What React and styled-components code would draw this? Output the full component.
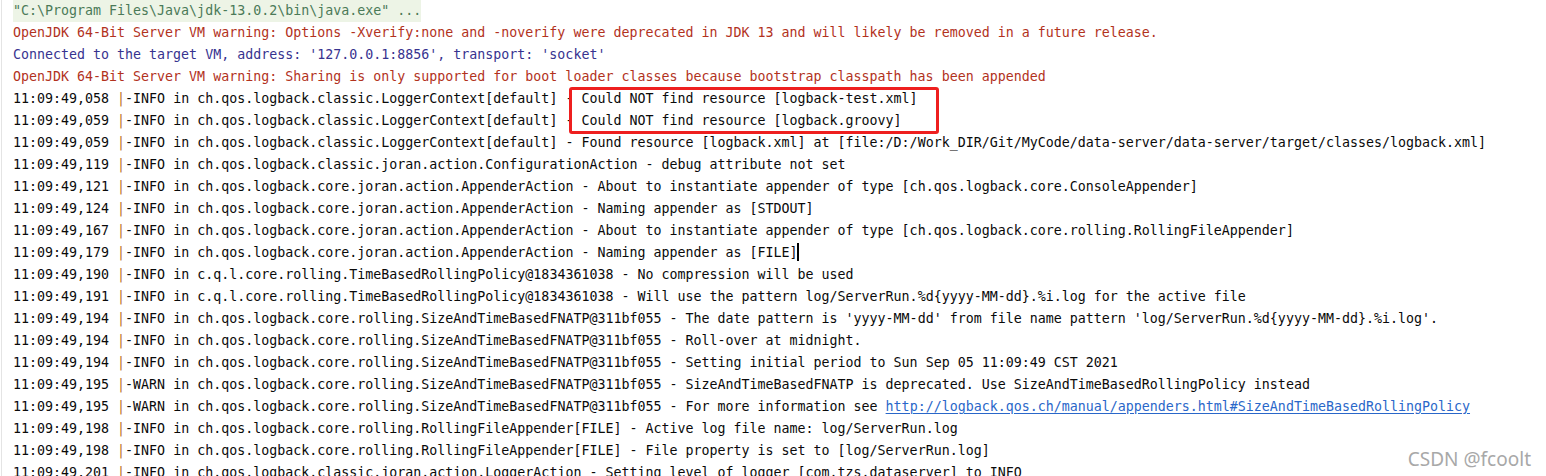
import React from "react";
import styled, { createGlobalStyle } from "styled-components";

const Global = createGlobalStyle`
  html, body { margin: 0; padding: 0; background: #ffffff; overflow: hidden; }
  #root { width: 1546px; height: 476px; overflow: hidden; }
`;

const Console = styled.div`
  position: relative;
  height: 476px;
  margin-left: 1px;
  border-left: 1px solid #e4e4e4;
  padding-left: 11px;
  font-family: "DejaVu Sans Mono", "Liberation Mono", monospace;
  font-size: 13.3px;
  line-height: 22px;
  color: #0a0a0a;
  white-space: pre;
  overflow: hidden;
`;

const toneColor = {
  cmd: "#4b7a58",
  err: "#b2321d",
  sys: "#37338f",
  out: "#0a0a0a",
};

const Line = styled.div`
  height: 22px;
  color: ${(p) => toneColor[p.$tone] || toneColor.out};
`;

const CommandText = styled.span`
  display: inline-block;
  background: #edf4e6;
`;

const Pipe = styled.span`
  color: #bb7428;
`;

const Link = styled.span`
  color: #2a67c9;
  text-decoration: underline;
  text-underline-offset: 2px;
`;

const Caret = styled.span`
  display: inline-block;
  width: 2px;
  height: 18px;
  background: #000;
  vertical-align: -4px;
  margin-left: -1px;
`;

const Highlight = styled.div`
  position: absolute;
  left: 567px;
  top: 87px;
  width: 364px;
  height: 41px;
  border: 3px solid #ee1f1f;
  border-radius: 3px;
  pointer-events: none;
`;

const Watermark = styled.div`
  position: absolute;
  right: 15px;
  bottom: 5px;
  font-family: "Noto Sans", "Liberation Sans", sans-serif;
  font-size: 19px;
  line-height: 24px;
  color: #a8a8a8;
  white-space: nowrap;
`;

const logs = [
  ["058", "INFO in ch.qos.logback.classic.LoggerContext[default] - Could NOT find resource [logback-test.xml]"],
  ["059", "INFO in ch.qos.logback.classic.LoggerContext[default] - Could NOT find resource [logback.groovy]"],
  ["059", "INFO in ch.qos.logback.classic.LoggerContext[default] - Found resource [logback.xml] at [file:/D:/Work_DIR/Git/MyCode/data-server/data-server/target/classes/logback.xml]"],
  ["119", "INFO in ch.qos.logback.classic.joran.action.ConfigurationAction - debug attribute not set"],
  ["121", "INFO in ch.qos.logback.core.joran.action.AppenderAction - About to instantiate appender of type [ch.qos.logback.core.ConsoleAppender]"],
  ["124", "INFO in ch.qos.logback.core.joran.action.AppenderAction - Naming appender as [STDOUT]"],
  ["167", "INFO in ch.qos.logback.core.joran.action.AppenderAction - About to instantiate appender of type [ch.qos.logback.core.rolling.RollingFileAppender]"],
  ["179", "INFO in ch.qos.logback.core.joran.action.AppenderAction - Naming appender as [FILE]", "caret"],
  ["190", "INFO in c.q.l.core.rolling.TimeBasedRollingPolicy@1834361038 - No compression will be used"],
  ["191", "INFO in c.q.l.core.rolling.TimeBasedRollingPolicy@1834361038 - Will use the pattern log/ServerRun.%d{yyyy-MM-dd}.%i.log for the active file"],
  ["194", "INFO in ch.qos.logback.core.rolling.SizeAndTimeBasedFNATP@311bf055 - The date pattern is 'yyyy-MM-dd' from file name pattern 'log/ServerRun.%d{yyyy-MM-dd}.%i.log'."],
  ["194", "INFO in ch.qos.logback.core.rolling.SizeAndTimeBasedFNATP@311bf055 - Roll-over at midnight."],
  ["194", "INFO in ch.qos.logback.core.rolling.SizeAndTimeBasedFNATP@311bf055 - Setting initial period to Sun Sep 05 11:09:49 CST 2021"],
  ["195", "WARN in ch.qos.logback.core.rolling.SizeAndTimeBasedFNATP@311bf055 - SizeAndTimeBasedFNATP is deprecated. Use SizeAndTimeBasedRollingPolicy instead"],
  ["195", "WARN in ch.qos.logback.core.rolling.SizeAndTimeBasedFNATP@311bf055 - For more information see ", "link"],
  ["198", "INFO in ch.qos.logback.core.rolling.RollingFileAppender[FILE] - Active log file name: log/ServerRun.log"],
  ["198", "INFO in ch.qos.logback.core.rolling.RollingFileAppender[FILE] - File property is set to [log/ServerRun.log]"],
  ["201", "INFO in ch.qos.logback.classic.joran.action.LoggerAction - Setting level of logger [com.tzs.dataserver] to INFO"],
];

export default function App() {
  return (
    <>
      <Global />
      <Console>
        <Line $tone="cmd">
          <CommandText>"C:\Program Files\Java\jdk-13.0.2\bin\java.exe" ...</CommandText>
        </Line>
        <Line $tone="err">
          OpenJDK 64-Bit Server VM warning: Options -Xverify:none and -noverify were deprecated in JDK 13 and will likely be removed in a future release.
        </Line>
        <Line $tone="sys">Connected to the target VM, address: '127.0.0.1:8856', transport: 'socket'</Line>
        <Line $tone="err">
          OpenJDK 64-Bit Server VM warning: Sharing is only supported for boot loader classes because bootstrap classpath has been appended
        </Line>
        {logs.map(([ms, text, extra], i) => (
          <Line key={i} $tone="out">
            {`11:09:49,${ms} `}
            <Pipe>|</Pipe>
            {`-${text}`}
            {extra === "link" && (
              <Link>http://logback.qos.ch/manual/appenders.html#SizeAndTimeBasedRollingPolicy</Link>
            )}
            {extra === "caret" && <Caret />}
          </Line>
        ))}
        <Highlight />
        <Watermark>CSDN @fcoolt</Watermark>
      </Console>
    </>
  );
}
